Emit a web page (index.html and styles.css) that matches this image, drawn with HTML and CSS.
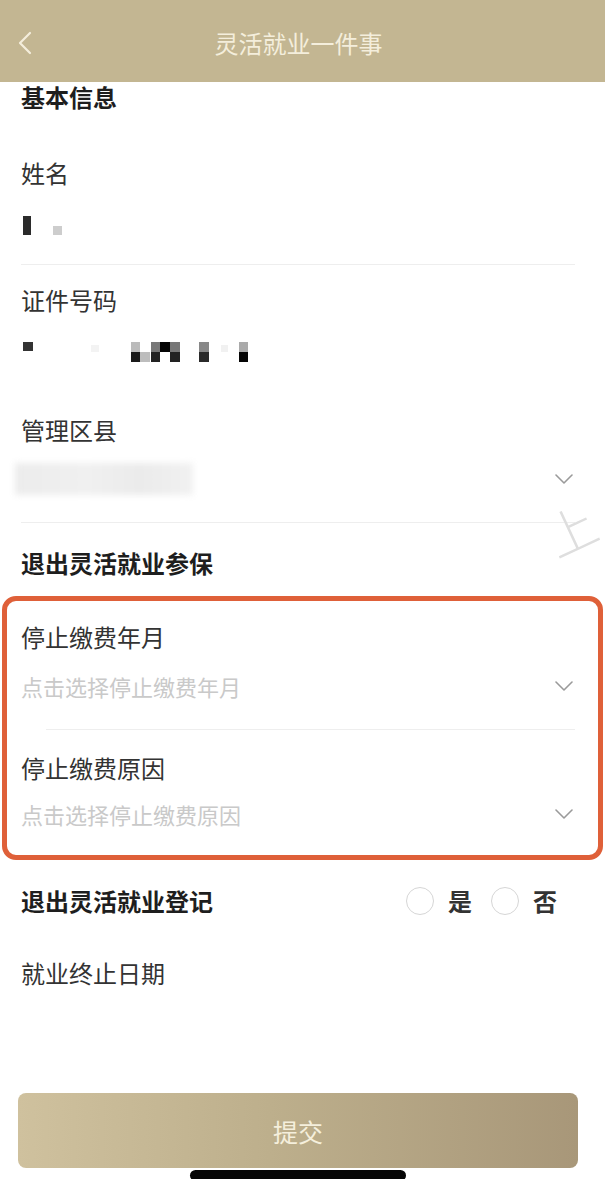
FILE: index.html
```html
<!DOCTYPE html>
<html lang="zh-CN">
<head>
<meta charset="utf-8">
<title>灵活就业一件事</title>
<link rel="stylesheet" href="styles.css">
</head>
<body>
<div class="page">
  <header class="nav">
    <svg class="back" width="16" height="24" viewBox="0 0 16 24"><polyline points="13,2 3,12 13,22" fill="none" stroke="#f4eedc" stroke-width="2.2" stroke-linecap="round" stroke-linejoin="round"/></svg>
    <h1 class="nav-title">灵活就业一件事</h1>
    <span></span>
  </header>

  <main class="content">
    <h2 class="section-title">基本信息</h2>

    <div class="field field-name">
      <div class="label">姓名</div>
      <div class="value">
        <svg width="60" height="20" viewBox="0 0 60 20"><rect x="0" y="0" width="8" height="19" fill="#2b2b2b"/><rect x="30" y="10" width="9" height="9" fill="#cdcdcd"/></svg>
      </div>
    </div>

    <div class="field field-id">
      <div class="label">证件号码</div>
      <div class="value">
        <svg width="230" height="20" viewBox="0 0 230 20">
          <rect x="0" y="0" width="10" height="9" fill="#333"/>
          <rect x="68" y="3" width="8" height="7" fill="#f3f3f3"/>
          <rect x="108" y="0" width="9" height="10" fill="#bbb"/>
          <rect x="108" y="10" width="9" height="10" fill="#1a1a1a"/>
          <rect x="117" y="10" width="10" height="10" fill="#bdbdbd"/>
          <rect x="128" y="0" width="9" height="10" fill="#777"/>
          <rect x="128" y="10" width="9" height="10" fill="#222"/>
          <rect x="137" y="0" width="10" height="10" fill="#050505"/>
          <rect x="147" y="0" width="10" height="10" fill="#777"/>
          <rect x="147" y="10" width="10" height="10" fill="#222"/>
          <rect x="176" y="0" width="10" height="10" fill="#888"/>
          <rect x="176" y="10" width="10" height="10" fill="#2a2a2a"/>
          <rect x="198" y="3" width="7" height="7" fill="#f1f1f1"/>
          <rect x="216" y="0" width="9" height="10" fill="#aaa"/>
          <rect x="216" y="10" width="9" height="10" fill="#050505"/>
        </svg>
      </div>
    </div>

    <div class="field field-area">
      <div class="label">管理区县</div>
      <div class="value">
        <span class="blurred"></span>
        <svg class="chev" width="18" height="10" viewBox="0 0 18 10"><polyline points="1,1 9,9 17,1" fill="none" stroke="#9a9a9a" stroke-width="1.6" stroke-linecap="round" stroke-linejoin="round"/></svg>
      </div>
    </div>

    <h2 class="section-title exit">退出灵活就业参保</h2>

    <div class="highlight">
      <div class="field field-month">
        <div class="label">停止缴费年月</div>
        <div class="value">
          <span class="placeholder">点击选择停止缴费年月</span>
          <svg class="chev" width="18" height="10" viewBox="0 0 18 10"><polyline points="1,1 9,9 17,1" fill="none" stroke="#9a9a9a" stroke-width="1.6" stroke-linecap="round" stroke-linejoin="round"/></svg>
        </div>
      </div>
      <div class="inner-divider"></div>
      <div class="field field-reason">
        <div class="label">停止缴费原因</div>
        <div class="value">
          <span class="placeholder">点击选择停止缴费原因</span>
          <svg class="chev" width="18" height="10" viewBox="0 0 18 10"><polyline points="1,1 9,9 17,1" fill="none" stroke="#9a9a9a" stroke-width="1.6" stroke-linecap="round" stroke-linejoin="round"/></svg>
        </div>
      </div>
    </div>

    <div class="reg-row">
      <h2 class="section-title">退出灵活就业登记</h2>
      <div class="radios">
        <span class="radio"></span><span class="radio-text">是</span>
        <span class="radio"></span><span class="radio-text">否</span>
      </div>
    </div>

    <div class="label end-date">就业终止日期</div>
  </main>

  <div class="footer">
    <button class="submit" type="button">提交</button>
  </div>

  <span class="watermark">上</span>
  <div class="home-indicator"></div>
</div>
</body>
</html>
```

FILE: styles.css
```css
* { box-sizing: border-box; }

html, body {
  margin: 0;
  padding: 0;
  background: #fff;
}

body {
  font-family: "Noto Sans CJK SC", "Noto Sans", sans-serif;
  color: #333;
}

.page {
  position: relative;
  height: 1179px;
  overflow: hidden;
  display: flex;
  flex-direction: column;
}

.nav {
  height: 82px;
  flex: none;
  background: #c3b692;
  display: grid;
  grid-template-columns: 60px 1fr 60px;
  align-items: center;
  padding-top: 4px;
}

.back {
  margin-left: 17px;
}

.nav-title {
  margin: 0;
  text-align: center;
  font-size: 24px;
  font-weight: 400;
  line-height: 34px;
  color: #f4eedc;
  padding-right: 8px;
}

.content {
  padding: 0 30px 0 21px;
}

.section-title {
  margin: 0;
  font-size: 24px;
  font-weight: 700;
  line-height: 30px;
  color: #1e1e1e;
}

.section-title.exit {
  margin-top: 25px;
}

.label {
  font-size: 24px;
  line-height: 34px;
  height: 34px;
  color: #333;
}

.field .value {
  height: 34px;
  display: flex;
  align-items: center;
  justify-content: space-between;
}

.field-name {
  margin-top: 26px;
  padding: 18px 0 21px;
  border-bottom: 1px solid #eeeeee;
}
.field-name .value { margin-top: 19px; padding-left: 2px; }

.field-id {
  padding: 18px 0 26px;
}
.field-id .value { margin-top: 18px; padding-left: 2px; }

.field-area {
  padding: 18px 0 26px;
  border-bottom: 1px solid #eeeeee;
}
.field-area .value { margin-top: 15px; }

.blurred {
  display: block;
  width: 178px;
  height: 32px;
  margin-left: -6px;
  background: linear-gradient(90deg, #ececec 0%, #f0f0f0 40%, #ebebeb 70%, #f1f1f1 100%);
  filter: blur(3px);
}

.chev {
  margin-right: 2px;
  flex: none;
}

.highlight {
  margin: 18px -28px 0 -19px;
  border: 5px solid #df6039;
  border-radius: 14px;
  padding: 0 23px 0 14px;
}

.field-month {
  padding: 19px 0 26px;
}
.field-month .value { margin-top: 15px; }

.inner-divider {
  height: 1px;
  background: #eeeeee;
  margin-left: 25px;
}

.field-reason {
  padding: 21px 0 24px;
}
.field-reason .value { margin-top: 12px; }

.placeholder {
  font-size: 22px;
  color: #c9c9c9;
}

.reg-row {
  margin-top: 26px;
  height: 30px;
  display: flex;
  align-items: center;
  justify-content: space-between;
}

.radios {
  display: flex;
  align-items: center;
  margin-right: 18px;
}

.radio {
  width: 28px;
  height: 28px;
  border: 1.5px solid #d6d6d6;
  border-radius: 50%;
}

.radio-text {
  margin: 0 19px 0 14px;
  font-size: 24px;
  font-weight: 700;
  line-height: 30px;
  color: #333;
}
.radio-text:last-child { margin-right: 0; }

.end-date {
  margin-top: 40px;
}

.footer {
  margin-top: auto;
  padding: 0 27px 11px 18px;
}

.submit {
  display: block;
  width: 100%;
  height: 75px;
  border: none;
  border-radius: 8px;
  background: linear-gradient(90deg, #cfc19e 0%, #bdaf8c 45%, #a89779 100%);
  font-family: "Noto Sans CJK SC", sans-serif;
  font-size: 25px;
  color: #f5efdc;
  padding: 0;
}

.watermark {
  position: absolute;
  left: 545px;
  top: 503px;
  font-size: 50px;
  line-height: 50px;
  font-weight: 300;
  color: #dedede;
  white-space: nowrap;
  transform: rotate(-25deg);
  transform-origin: 25px 25px;
  pointer-events: none;
}

.home-indicator {
  position: absolute;
  left: 190px;
  bottom: -2px;
  width: 216px;
  height: 11px;
  border-radius: 6px;
  background: #050505;
}
```
